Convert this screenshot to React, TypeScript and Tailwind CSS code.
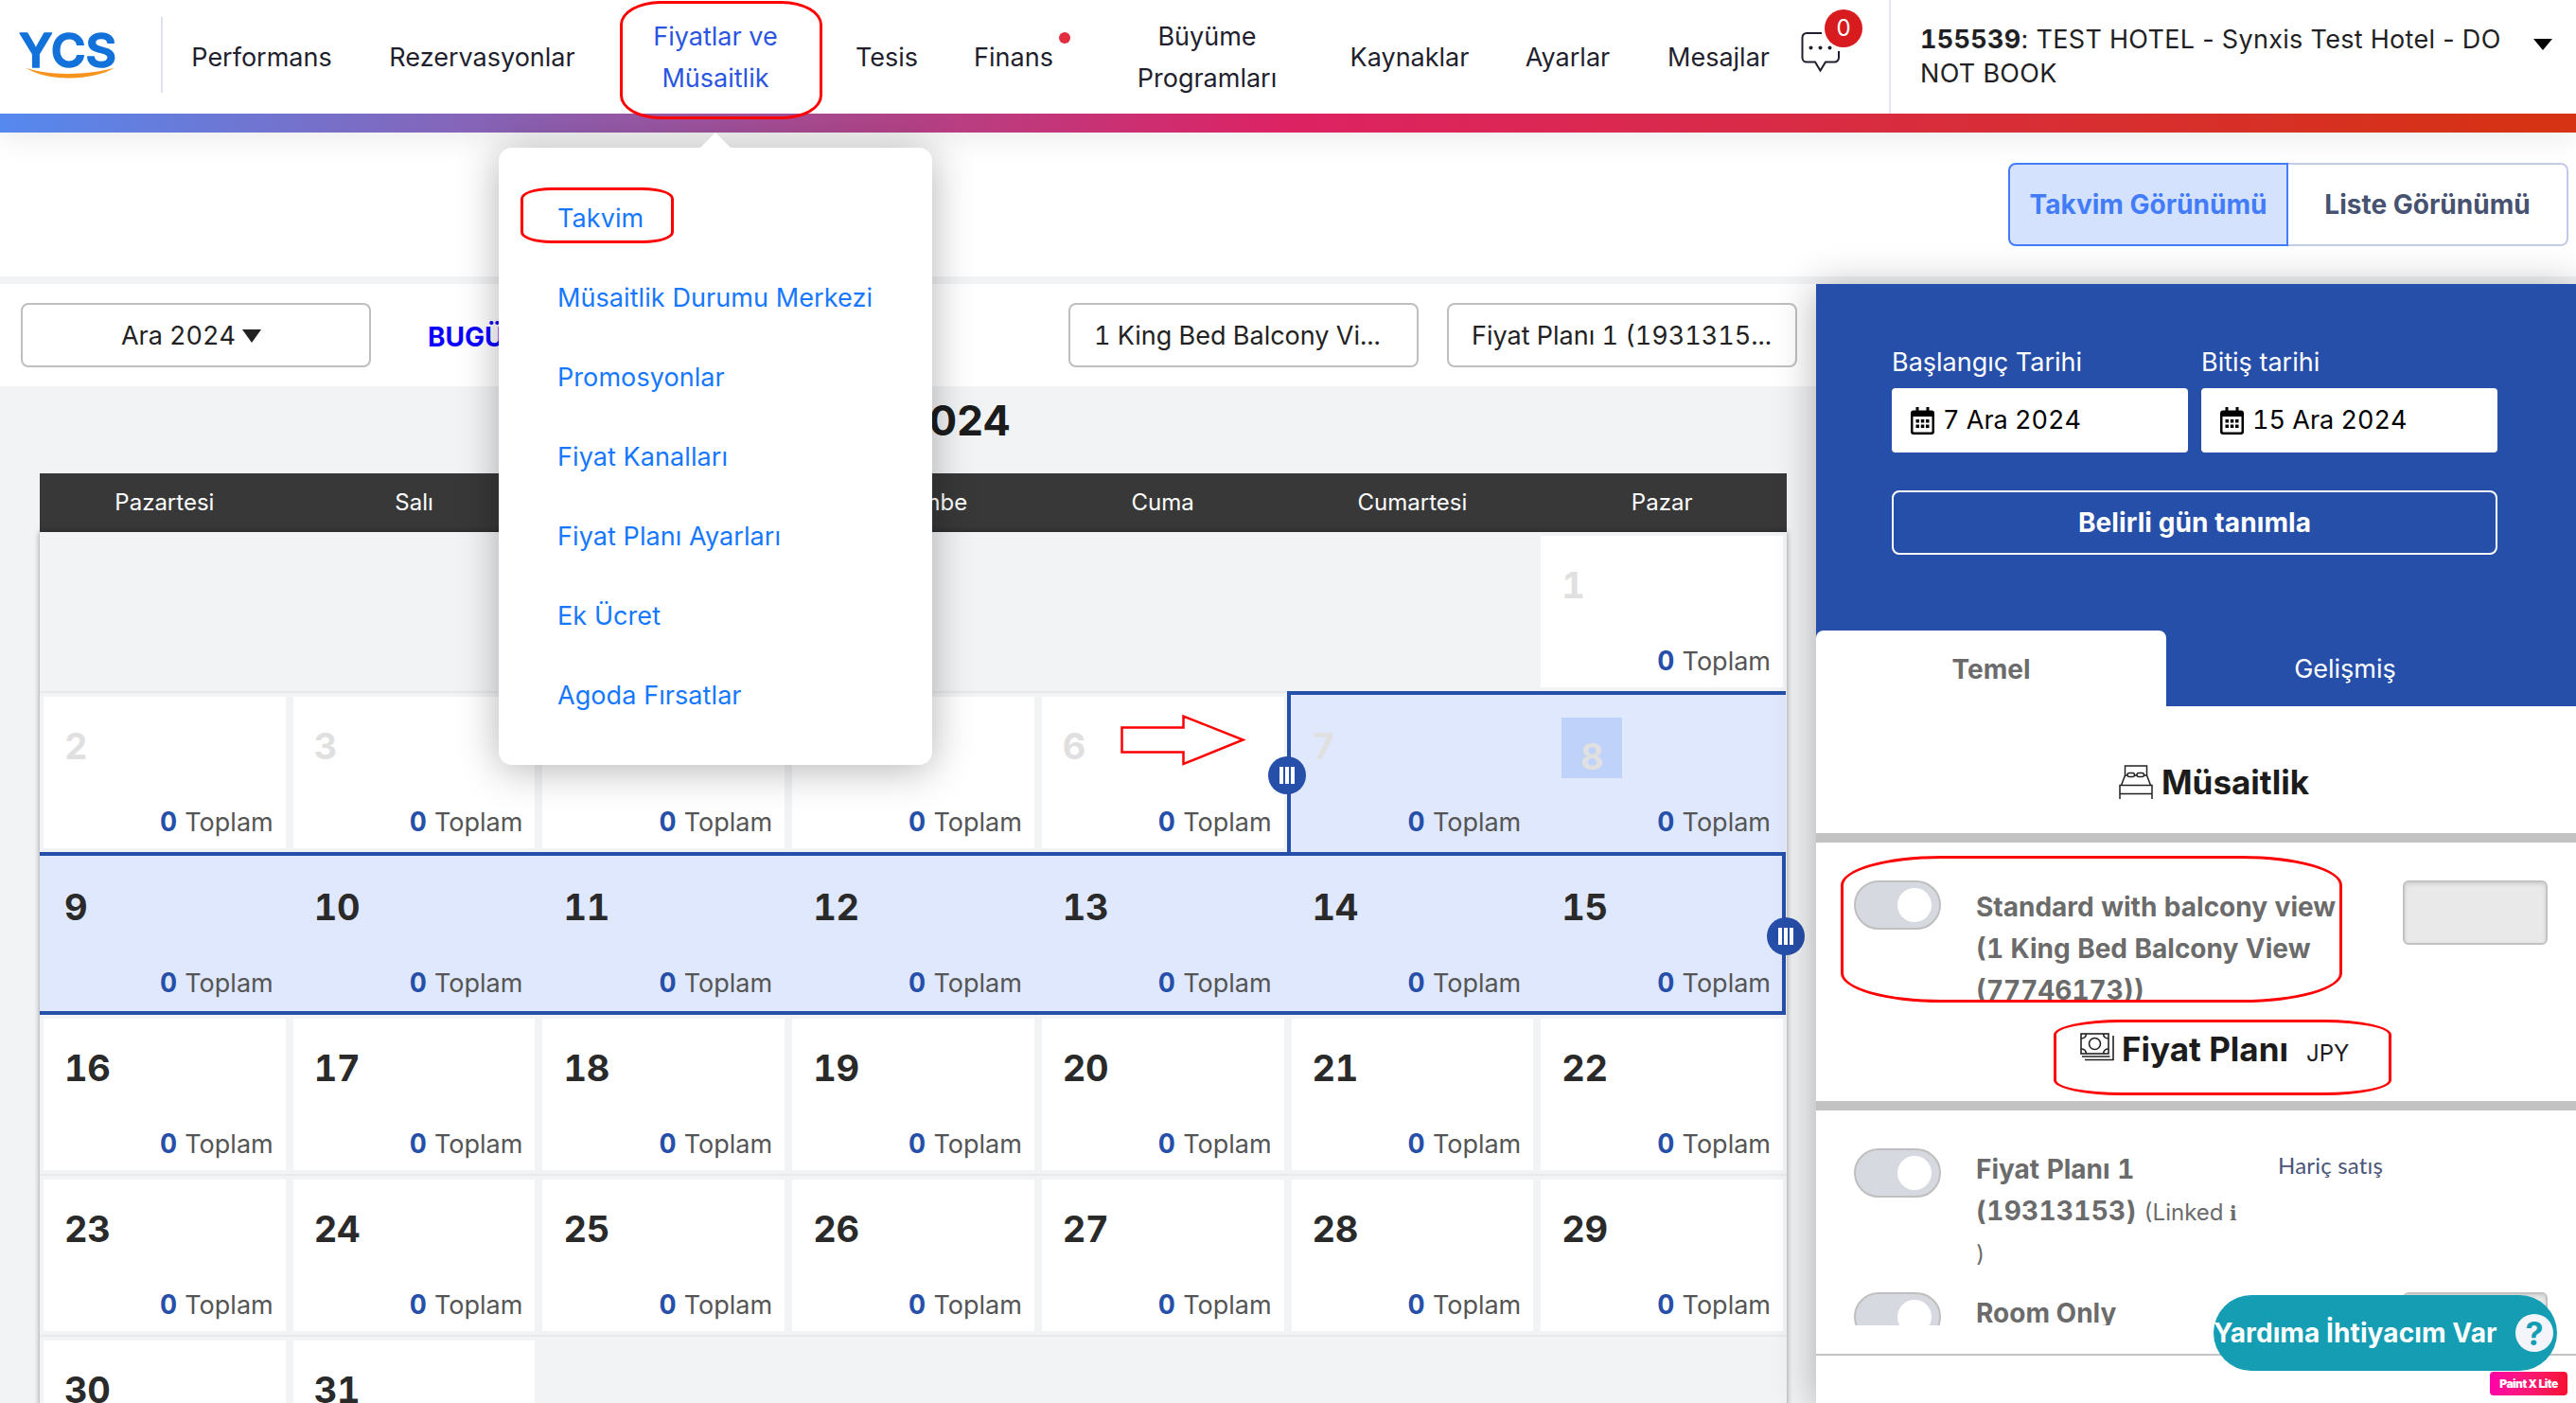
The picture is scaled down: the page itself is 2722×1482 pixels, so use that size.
import clsx from "clsx";

const navItems = [
  { label: "Performans", width: "w-[209px]" },
  { label: "Rezervasyonlar", width: "w-[257px]" },
  { label: "Fiyatlar ve Müsaitlik", width: "w-[236px] px-10", active: true },
  { label: "Tesis", width: "w-[126px]" },
  { label: "Finans", width: "w-[142px]", dot: true },
  { label: "Büyüme Programları", width: "w-[267px] px-10" },
  { label: "Kaynaklar", width: "w-[161px]" },
  { label: "Ayarlar", width: "w-[173px]" },
  { label: "Mesajlar", width: "w-[146px]" },
];

const menuItems = [
  "Takvim",
  "Müsaitlik Durumu Merkezi",
  "Promosyonlar",
  "Fiyat Kanalları",
  "Fiyat Planı Ayarları",
  "Ek Ücret",
  "Agoda Fırsatlar",
];

const weekdays = ["Pazartesi", "Salı", "Çarşamba", "Perşembe", "Cuma", "Cumartesi", "Pazar"];

// December 2024 starts on a Sunday
const weeks: (number | null)[][] = [
  [null, null, null, null, null, null, 1],
  [2, 3, 4, 5, 6, 7, 8],
  [9, 10, 11, 12, 13, 14, 15],
  [16, 17, 18, 19, 20, 21, 22],
  [23, 24, 25, 26, 27, 28, 29],
  [30, 31, null, null, null, null, null],
];

const TODAY = 8;
const RANGE_START = 7;
const RANGE_END = 15;

function Logo() {
  return (
    <svg className="overflow-visible" width="104" height="54" viewBox="0 0 104 54">
      <text
        x="0"
        y="37.500"
        fontFamily="Inter, sans-serif"
        fontWeight="600"
        fontSize="50"
        textLength="103"
        lengthAdjust="spacingAndGlyphs"
        fill="#1272da"
        stroke="#1272da"
        strokeWidth="1.500"
        strokeLinejoin="round"
      >
        YCS
      </text>
      <path d="M7 38.500 C30 47 72 47 101 38.500 C80 52 30 54 7 38.500Z" fill="#f7941d" />
    </svg>
  );
}

function ChatIcon() {
  return (
    <svg width="42" height="44" viewBox="0 0 42 44" fill="none" stroke="#1f1f2e" strokeWidth="2">
      <path d="M22 2H6a4.500 4.500 0 0 0-4.500 4.500V28A4.500 4.500 0 0 0 6 32.500H15L20.500 41.500L26 32.500H35.500A4.500 4.500 0 0 0 40 28V21" />
      <circle cx="10.500" cy="17.500" r="2" fill="#1f1f2e" stroke="none" />
      <circle cx="20.500" cy="17.500" r="2" fill="#1f1f2e" stroke="none" />
      <circle cx="30.500" cy="17.500" r="2" fill="#1f1f2e" stroke="none" />
    </svg>
  );
}

function CalendarIcon() {
  return (
    <svg width="25" height="29" viewBox="0 0 25 29">
      <path
        fillRule="evenodd"
        d="M5.500 0h3v3.500h8V0h3v3.500H22a3 3 0 0 1 3 3V26a3 3 0 0 1-3 3H3a3 3 0 0 1-3-3V6.500a3 3 0 0 1 3-3h2.500zM2.500 10v15.500a1 1 0 0 0 1 1h18a1 1 0 0 0 1-1V10z"
      />
      <path d="M5.500 13h3.500v3.500H5.500zM10.800 13h3.500v3.500h-3.500zM16 13h3.500v3.500H16zM5.500 18.500h3.500V22H5.500zM10.800 18.500h3.500V22h-3.500zM16 18.500h3.500V22H16z" />
    </svg>
  );
}

function BedIcon() {
  return (
    <svg width="36" height="36" viewBox="0 0 36 36" fill="none" stroke="#222" strokeWidth="1.500">
      <path d="M1 36V21.500H35V36M1 30.500H35M2.500 21.500L6.500 11V1H29.500V11L33.500 21.500" />
      <rect x="9" y="8.500" width="7.500" height="4" rx="2" />
      <rect x="19" y="8.500" width="7.500" height="4" rx="2" />
      <path d="M6.500 11H9M16.500 11H19M26.500 11H29.500" />
    </svg>
  );
}

function MoneyIcon() {
  return (
    <svg width="36" height="30" viewBox="0 0 36 30" fill="none" stroke="#222" strokeWidth="1.600">
      <rect x="1" y="1" width="29" height="21" />
      <circle cx="15.500" cy="11.500" r="6" />
      <path d="M1 6Q6 6 6.500 1M24.500 1Q25 6 30 6M1 17Q6 17 6.500 22M24.500 22Q25 17 30 17" />
      <path d="M2 25H31.500M5 28.500H35V3" />
    </svg>
  );
}

function Header() {
  return (
    <header className="relative z-10 bg-white shadow-[0_4px_32px_rgba(0,0,0,0.09)]">
      <div className="flex h-[120px]">
        <div className="flex w-[150px] shrink-0 pl-5 pt-[33px]">
          <Logo />
        </div>
        <div className="ml-5 mt-[18px] h-20 w-0.5 shrink-0 bg-[#dde1ec]" />
        <nav className="flex items-center pt-0.5 text-[27px] leading-[44px] text-[#1f1f2e]">
          {navItems.map((item) => (
            <a
              key={item.label}
              className={clsx("relative shrink-0 text-center", item.width, item.active && "text-[#2b55e0]")}
            >
              {item.label}
              {item.dot && <span className="absolute -top-[5px] left-[119px] size-3 rounded-full bg-[#e12d3f]" />}
            </a>
          ))}
        </nav>
        <div className="relative ml-3.5 mt-[33px] w-[93px] shrink-0">
          <ChatIcon />
          <span className="absolute -top-[23px] left-[25px] flex size-10 items-center justify-center rounded-full bg-[#d71b1e] text-2xl text-white">
            0
          </span>
        </div>
        <div className="flex grow border-l-2 border-[#e6e6f5] pl-[31px] pt-6 text-[27px] leading-9 tracking-[0.3px] text-[#1f1f24]">
          <div className="w-[632px] whitespace-nowrap">
            <span className="font-bold tabular-nums">155539</span>: TEST HOTEL - Synxis Test Hotel - DO
            <br />
            NOT BOOK
          </div>
          <svg className="ml-4 mt-[17px]" width="20" height="12" viewBox="0 0 20 12">
            <path d="M0 0H20L10 12Z" />
          </svg>
        </div>
      </div>
      <div className="h-5 bg-[linear-gradient(97deg,#5589ef_0%,#ad478c_33%,#dd2263_50%,#d92b48_68%,#d63214_98%)]" />
    </header>
  );
}

function RatesMenu() {
  return (
    <div className="absolute left-[527px] top-[156px] z-30 h-[652px] w-[458px] rounded-[14px] bg-white pl-[62px] pt-[33px] shadow-[0_4px_44px_rgba(0,0,0,0.3)]">
      <svg className="absolute -top-4 left-[212px]" width="34" height="17" viewBox="0 0 34 17">
        <path d="M0 17L17 0L34 17Z" fill="#fff" />
      </svg>
      {menuItems.map((item) => (
        <a key={item} className="block h-[84px] text-[27px] leading-[84px] tracking-[0.08px] text-[#1677ff]">
          {item}
        </a>
      ))}
    </div>
  );
}

function Handle({ className }: { className: string }) {
  return (
    <div
      className={clsx(
        "absolute z-20 flex size-10 items-center justify-center gap-0.5 rounded-full bg-[#264fa9]",
        className
      )}
    >
      <span className="h-[18px] w-1 bg-white" />
      <span className="h-[18px] w-1 bg-white" />
      <span className="h-[18px] w-1 bg-white" />
    </div>
  );
}

function DayCell({ day }: { day: number | null }) {
  if (day === null) return <div />;
  const selected = day >= RANGE_START && day <= RANGE_END;
  const past = day <= TODAY;
  return (
    <div className="relative h-[168px] p-1">
      <div className={clsx("flex h-full flex-col tabular-nums", !selected && "bg-white")}>
        {day === TODAY ? (
          <div className="ml-[22px] mt-[22px] flex h-16 w-16 justify-center bg-[#bfd2fa] pt-[21px] text-[38px] font-bold leading-10 text-[#e0e0e0]">
            {day}
          </div>
        ) : (
          <div
            className={clsx(
              "pl-[22px] pt-8 text-[38px] font-bold leading-10 tracking-[-0.3px]",
              past ? "text-[#e0e0e0]" : "text-[#2a2a2a]"
            )}
          >
            {day}
          </div>
        )}
        <div className="mt-auto pb-[7px] pr-[13px] text-right text-[27px] leading-10 text-[#555]">
          <span className="mr-px text-[28px] font-bold text-[#264fa9]">0</span> Toplam
        </div>
      </div>
    </div>
  );
}

function Calendar() {
  return (
    <div className="px-[42px]">
      <h2 className="h-[92px] w-[1026px] pt-[11px] text-right text-[44px] font-bold leading-[50px] text-[#1c1c1c]">
        Aralık 2024
      </h2>
      <div className="w-[1846px]">
        <div className="grid h-[62px] grid-cols-7 items-center bg-[#383838] text-center text-2xl text-white">
          {weekdays.map((name) => (
            <div key={name}>{name}</div>
          ))}
        </div>
        <div className="shadow-[0_0_6px_rgba(0,0,0,0.4)]">
          {weeks.map((week, i) => (
            <div key={i} className="relative grid h-[170px] grid-cols-7 border-b-2 border-[#e8e9eb] bg-[#f2f3f5]">
              {week.includes(RANGE_START) && (
                <>
                  <div className="absolute -top-0.5 left-[1318px] right-px h-[170px] border-l-4 border-t-4 border-[#264fa9] bg-[#dfe8fd]" />
                  <Handle className="left-[1298px] top-[67px]" />
                </>
              )}
              {week.includes(RANGE_END) && (
                <>
                  <div className="absolute -top-0.5 left-0 right-px h-[172px] border-y-4 border-r-4 border-[#264fa9] bg-[#dfe8fd]" />
                  <Handle className="left-[1825px] top-[67px]" />
                </>
              )}
              {week.map((day, j) => (
                <DayCell key={j} day={day} />
              ))}
            </div>
          ))}
        </div>
      </div>
    </div>
  );
}

function Toolbar() {
  const box =
    "flex h-[68px] w-[370px] items-center whitespace-nowrap rounded-lg border-2 border-[#bfbfbf] pt-0.5 text-[27px] tabular-nums text-[#222]";
  return (
    <div className="flex h-[108px] items-start bg-white pl-[22px] pt-5">
      <button className={clsx(box, "justify-center gap-[7px] pr-2.5")}>
        Ara 2024
        <svg width="20" height="14" viewBox="0 0 20 14">
          <path d="M0 0H20L10 14Z" fill="#222" />
        </svg>
      </button>
      <span className="ml-[60px] mt-4 w-[677px] text-[28px] font-bold leading-10 text-[#0b00ff]">BUGÜN</span>
      <div className={clsx(box, "pl-[25px]")}>1 King Bed Balcony Vi...</div>
      <div className={clsx(box, "ml-[30px] pl-6")}>Fiyat Planı 1 (1931315...</div>
    </div>
  );
}

function Toggle() {
  return (
    <div className="flex h-[52px] w-[92px] shrink-0 items-center justify-end rounded-full border-2 border-[#bfbfbf] bg-[#d6d9df] pr-2">
      <span className="size-9 rounded-full bg-white" />
    </div>
  );
}

function RateInput() {
  return (
    <div className="h-[68px] w-[153px] shrink-0 rounded-md border-2 border-[#c2c2c2] bg-[#e9e9e9] shadow-[inset_0_2px_4px_rgba(0,0,0,0.12)]" />
  );
}

function DateField({ label, value }: { label: string; value: string }) {
  return (
    <div className="w-[313px]">
      <div className="pt-px text-[27px] leading-10 text-white">{label}</div>
      <div className="mt-[7px] flex h-[68px] items-center gap-[9px] rounded bg-white pl-5 pt-px text-[27px] tabular-nums text-black">
        <CalendarIcon />
        {value}
      </div>
    </div>
  );
}

function SidePanel() {
  return (
    <aside className="relative z-20 h-[1182px] w-[803px] bg-white shadow-[0_4px_40px_rgba(0,0,0,0.3)]">
      <div className="h-[446px] bg-[#264fa9]">
        <div className="h-[366px] px-20 pt-[62px]">
          <div className="flex gap-3.5">
            <DateField label="Başlangıç Tarihi" value="7 Ara 2024" />
            <DateField label="Bitiş tarihi" value="15 Ara 2024" />
          </div>
          <button className="mt-10 h-[68px] w-[640px] rounded-lg border-2 border-white text-[28px] font-bold tracking-[0.1px] text-white">
            Belirli gün tanımla
          </button>
        </div>
        <div className="flex h-20 text-[27px] leading-[82px]">
          <div className="h-20 w-[370px] rounded-t-lg bg-white text-center text-[28px] font-bold text-[#6b6b6b]">Temel</div>
          <div className="w-[378px] text-center text-white">Gelişmiş</div>
        </div>
      </div>

      <div className="flex h-36 gap-[9px] border-b-[10px] border-[#c2c2c2] pl-[320px] pt-[62px]">
        <BedIcon />
        <h3 className="-mt-[3px] text-[35px] font-bold leading-[42px] text-[#1c1c1c]">Müsaitlik</h3>
      </div>

      <div className="flex h-[170px] overflow-hidden pl-10 pt-10">
        <Toggle />
        <div className="ml-[37px] mt-1.5 w-[451px] whitespace-nowrap text-[28px] font-bold leading-[44px] tabular-nums text-[#6b6b6b]">
          Standard with balcony view
          <br />
          (1 King Bed Balcony View
          <br />
          (77746173))
        </div>
        <RateInput />
      </div>

      <div className="flex h-[113px] border-b-[10px] border-[#c2c2c2] pl-[279px] pt-8 text-[#1c1c1c]">
        <div className="-mt-px">
          <MoneyIcon />
        </div>
        <h3 className="-mt-3.5 ml-2 text-[35px] font-bold leading-[60px]">Fiyat Planı</h3>
        <span className="-mt-[9px] ml-[19px] text-2xl leading-[60px]">JPY</span>
      </div>

      <div className="h-[259px] border-b-2 border-[#c4c4c4]">
        <div className="h-[227px] overflow-hidden pl-10 pt-10">
          <div className="flex h-[152px]">
            <Toggle />
            <div className="ml-[37px] w-[301px] whitespace-nowrap text-[28px] font-bold leading-[44px] tabular-nums text-[#6b6b6b]">
              Fiyat Planı 1<br />
              <span className="tracking-[0.3px]">(19313153)</span>{" "}
              <span className="text-2xl font-normal">
                (Linked <b className="font-['DejaVu_Serif'] text-xl">i</b>
                <br />)
              </span>
            </div>
            <div className="ml-[18px] font-['Lato'] text-2xl leading-9 tracking-[0.2px] text-[#4a5578]">Hariç satış</div>
          </div>
          <div className="flex">
            <Toggle />
            <div className="ml-[37px] w-[451px] text-[28px] font-bold leading-[44px] text-[#6b6b6b]">Room Only</div>
            <RateInput />
          </div>
        </div>
      </div>
    </aside>
  );
}

function HelpButton() {
  return (
    <div className="absolute left-[2339px] top-[1368px] z-30 flex h-20 w-[363px] items-center whitespace-nowrap rounded-full bg-[#159db4] text-[28px] font-bold text-white">
      <span className="w-[319px] tracking-[0.1px]">Yardıma İhtiyacım Var</span>
      <span className="flex size-10 items-center justify-center rounded-full bg-[#f3f5fa] text-[34px] text-[#159db4]">?</span>
    </div>
  );
}

// Hand-drawn red marks laid over the page
function Annotations() {
  const mark = "absolute z-40 rounded-[20%] border-[3px] border-[#ff0000]";
  return (
    <>
      <div className={clsx(mark, "left-[655px] top-px h-[125px] w-[214px]")} />
      <div className={clsx(mark, "left-[550px] top-[198px] h-[59px] w-[162px]")} />
      <div className={clsx(mark, "left-[1945px] top-[904px] h-[155px] w-[530px]")} />
      <div className={clsx(mark, "left-[2170px] top-[1077px] h-[80px] w-[357px]")} />
      <svg className="absolute left-[1183px] top-[753px] z-40" width="134" height="58" viewBox="0 0 134 58">
        <path d="M2.500 15.500H67.500V3.500L130.500 28.500L67.500 54V41.500H2.500Z" fill="none" stroke="#ff0000" strokeWidth="2.500" />
      </svg>
    </>
  );
}

export default function App() {
  return (
    <div className="relative h-[1482px] w-[2722px] overflow-hidden bg-[#f2f3f5] font-['Inter',sans-serif]">
      <Header />
      <div className="flex h-[152px] justify-end bg-white pr-2 pt-8 text-[28px] font-bold">
        <button className="h-[88px] w-[296px] rounded-l-lg border-2 border-[#437cf8] bg-[#d5e2fd] text-[#437cf8]">
          Takvim Görünümü
        </button>
        <button className="h-[88px] w-[296px] rounded-r-lg border-2 border-l-0 border-[#c3cbe6] text-[#46526f]">
          Liste Görünümü
        </button>
      </div>
      <div className="mt-2 flex h-[1182px]">
        <main className="w-[1919px]">
          <Toolbar />
          <Calendar />
        </main>
        <SidePanel />
      </div>
      <RatesMenu />
      <HelpButton />
      <div className="absolute left-[2631px] top-[1449px] z-30 flex h-[25px] w-[82px] items-center justify-center whitespace-nowrap rounded bg-linear-to-r from-[#ff00a8] to-[#f8102c] text-xs font-black tracking-[-0.5px] text-white">
        Paint X Lite
      </div>
      <Annotations />
    </div>
  );
}
